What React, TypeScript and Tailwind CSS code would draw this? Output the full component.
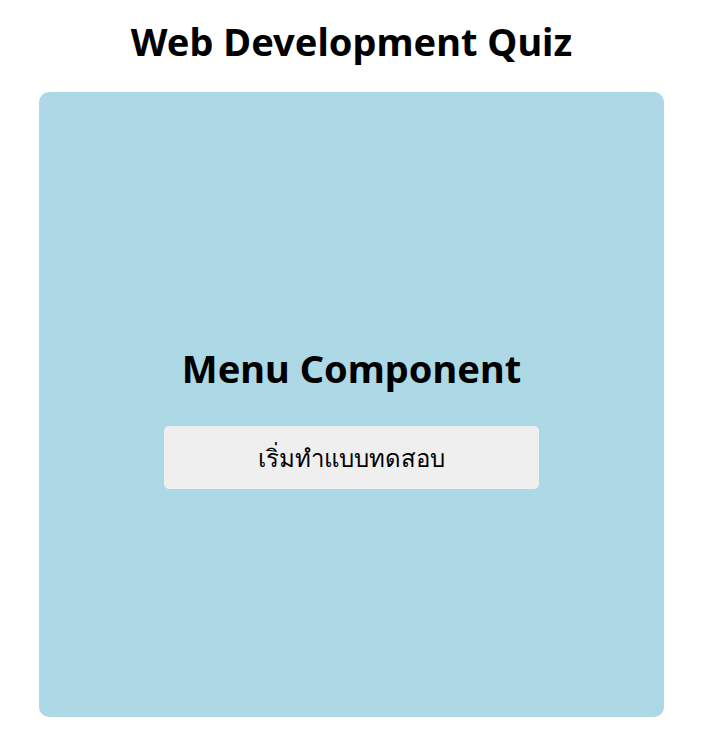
export default function App() {
  return (
    <div className="min-h-screen bg-white font-['Noto_Sans',sans-serif] text-black">
      <div className="ml-[39px] w-[625px] pt-[15px]">
        <h1 className="text-center text-[38px] font-bold leading-[52px]">Web Development Quiz</h1>
        <div className="mt-[25px] flex h-[625px] flex-col items-center justify-center rounded-[10px] bg-[#add8e6] pt-[22px]">
          <h2 className="text-[38px] font-bold leading-[52px]">Menu Component</h2>
          <button className="mt-[32px] h-[63px] w-[375px] rounded-[5px] bg-[#efefef] text-[24px]">
            เริ่มทำแบบทดสอบ
          </button>
        </div>
      </div>
    </div>
  );
}
